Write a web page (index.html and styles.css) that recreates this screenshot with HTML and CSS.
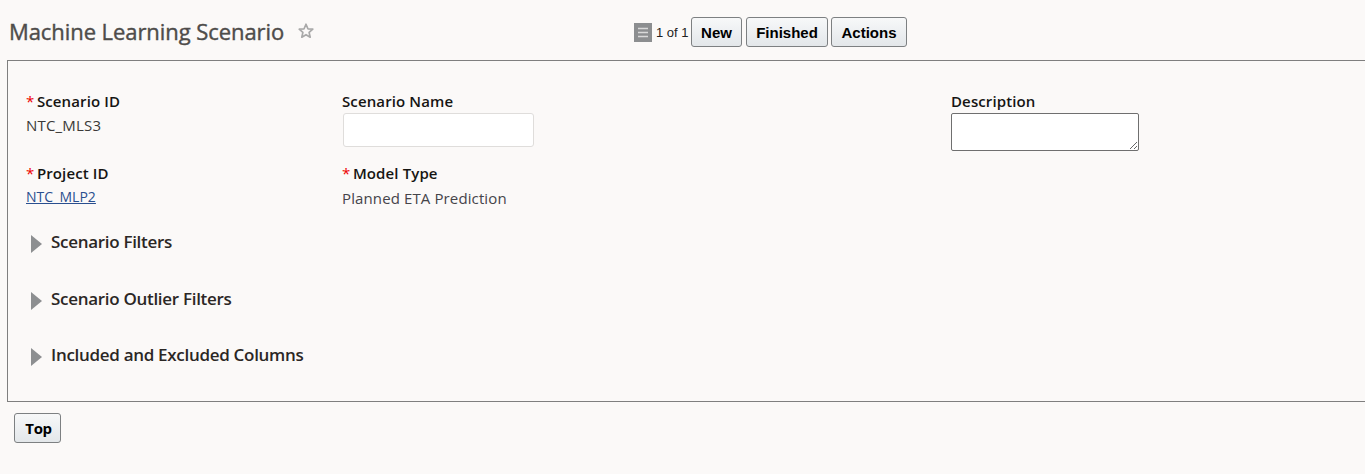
FILE: index.html
```html
<!DOCTYPE html>
<html lang="en">
<head>
<meta charset="utf-8">
<title>Machine Learning Scenario</title>
<link rel="stylesheet" href="styles.css">
</head>
<body>
<header class="page-header">
  <div class="title-group">
    <h1 class="page-title">Machine Learning Scenario</h1>
    <svg class="star" width="18" height="18" viewBox="0 0 18 18"><path d="M9 2.2l1.9 4.6 4.9.4-3.7 3.2 1.1 4.8L9 12.7l-4.2 2.5 1.1-4.8-3.7-3.2 4.9-.4z" fill="#fbf9f8" stroke="#a9a9a9" stroke-width="1.7" stroke-linejoin="round"/></svg>
  </div>
  <div class="toolbar">
    <svg class="list-icon" width="18" height="19" viewBox="0 0 18 19"><rect width="18" height="19" fill="#8c8e90"/><path d="M4 5.5h10M4 9.5h10M4 13.5h10" stroke="#d9d9d9" stroke-width="1.6"/></svg>
    <span class="pager">1 of 1</span>
    <button class="btn btn-new">New</button>
    <button class="btn btn-finished">Finished</button>
    <button class="btn btn-actions">Actions</button>
  </div>
</header>
<main class="panel">
  <div class="fields">
    <div class="field field-id">
      <div class="label"><span class="req">*</span> Scenario ID</div>
      <div class="value">NTC_MLS3</div>
    </div>
    <div class="field field-name">
      <div class="label">Scenario Name</div>
      <input class="text-input" type="text">
    </div>
    <div class="field field-desc">
      <div class="label">Description</div>
      <textarea class="text-area"></textarea>
    </div>
    <div class="field field-project">
      <div class="label"><span class="req">*</span> Project ID</div>
      <a class="link" href="#">NTC_MLP2</a>
    </div>
    <div class="field field-model">
      <div class="label"><span class="req">*</span> Model Type</div>
      <div class="value value-model">Planned ETA Prediction</div>
    </div>
  </div>
  <div class="sections">
    <div class="section"><span class="arrow"></span><span class="section-title">Scenario Filters</span></div>
    <div class="section"><span class="arrow"></span><span class="section-title">Scenario Outlier Filters</span></div>
    <div class="section"><span class="arrow"></span><span class="section-title">Included and Excluded Columns</span></div>
  </div>
</main>
<footer class="page-footer">
  <button class="btn btn-top">Top</button>
</footer>
</body>
</html>
```

FILE: styles.css
```css
* { box-sizing: border-box; }
html, body { margin: 0; padding: 0; height: 100%; }
body {
  background: #fbf9f8;
  font-family: "Open Sans", "Noto Sans", sans-serif;
  overflow: hidden;
  color: #161513;
}
.page-header {
  display: grid;
  grid-template-columns: 633px auto;
  height: 60px;
  align-items: center;
}
.title-group { display: flex; align-items: center; padding: 2px 0 0 9px; }
.page-title {
  margin: 0;
  font-size: 22px;
  font-weight: 400;
  letter-spacing: -0.07px;
  color: #4e4c4a;
  line-height: 30px;
  -webkit-text-stroke: 0.4px #4e4c4a;
}
.star { margin: -1px 0 0 13px; }
.toolbar { display: flex; align-items: center; padding-top: 4px; }
.list-icon { margin: 0 4px 0 1px; }
.pager { font-family: "Liberation Sans", sans-serif; font-size: 13px; color: #222; margin-right: 2px; }
.btn {
  height: 30px;
  padding: 0 0 0 1px;
  border: 1px solid #7d8082;
  border-radius: 3px;
  background: linear-gradient(#f7f8f9, #e3e7ea);
  font-family: "Liberation Sans", sans-serif;
  font-weight: 700;
  font-size: 15px;
  color: #000;
}
.btn-new { width: 51px; }
.btn-finished { width: 82px; margin-left: 4px; }
.btn-actions { width: 76px; margin-left: 3px; }
.panel {
  height: 342px;
  width: 1400px;
  margin-left: 7px;
  border: 1px solid #7f7f7f;
  padding: 29px 0 0 18px;
}
.fields {
  display: grid;
  grid-template-columns: 316px 609px 200px;
  grid-template-rows: 72px 45px;
}
.field-id { grid-column: 1; grid-row: 1; }
.field-name { grid-column: 2; grid-row: 1; }
.field-desc { grid-column: 3; grid-row: 1; }
.field-project { grid-column: 1; grid-row: 2; }
.field-model { grid-column: 2; grid-row: 2; }
.label {
  font-size: 15px;
  font-weight: 600;
  line-height: 22px;
  letter-spacing: 0.12px;
  color: #161513;
}
.req { color: #e00; font-weight: 400; letter-spacing: -1.4px; }
.value {
  font-size: 15px;
  line-height: 20px;
  margin-top: 3px;
  letter-spacing: 0.2px;
  color: #3a3937;
}
.value-model { margin-top: 4px; letter-spacing: 0.12px; color: #45444a; }
.link {
  display: inline-block;
  font-size: 14px;
  line-height: 20px;
  margin-top: 3px;
  letter-spacing: 0.05px;
  color: #2a4f8f;
}
.text-input {
  display: block;
  width: 191px;
  height: 34px;
  margin: 1px 0 0 1px;
  border: 1px solid #dfdddb;
  border-radius: 3px;
  background: #fff;
}
.text-area {
  display: block;
  width: 188px;
  height: 38px;
  margin: 1px 0 0;
  border: 1px solid #6f6f6f;
  border-radius: 2px;
  background: #fff;
  padding: 0;
  resize: both;
}
.sections { padding: 7.3px 0 0 5px; }
.section { display: flex; align-items: center; height: 56.5px; }
.arrow {
  width: 0;
  height: 0;
  border-style: solid;
  border-width: 9px 0 9px 11px;
  border-color: transparent transparent transparent #8d8f91;
  margin: 3px 9px 0 0;
}
.section-title {
  font-size: 17px;
  font-weight: 600;
  letter-spacing: -0.3px;
  color: #2b2725;
  margin-top: -2px;
}
.page-footer { padding: 11px 0 0 14px; }
.btn-top { width: 47px; font-family: "Open Sans", sans-serif; letter-spacing: -0.4px; padding-left: 2px; }
```
